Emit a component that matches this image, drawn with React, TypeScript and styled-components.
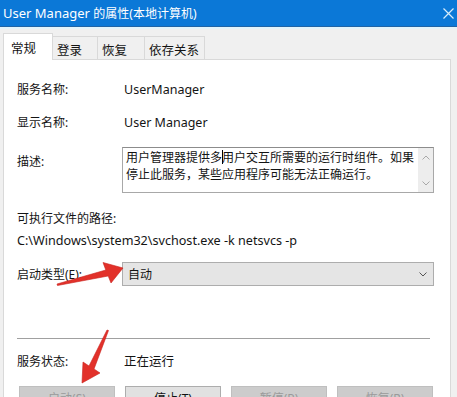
import React from "react";
import styled, { createGlobalStyle } from "styled-components";

const Global = createGlobalStyle`
  html, body { margin: 0; padding: 0; background: #f0f0f0; }
  body { width: 457px; height: 397px; overflow: hidden; }
`;

const Window = styled.div`
  position: relative;
  width: 457px;
  height: 397px;
  overflow: hidden;
  background: #f0f0f0;
  display: flex;
  flex-direction: column;
  font-family: "Noto Sans", "Noto Sans CJK SC", sans-serif;
  font-size: 12px;
  color: #141414;
`;

const TitleBar = styled.div`
  height: 26px;
  flex: none;
  background: #0b78d7;
  border-bottom: 1px solid #1f64a6;
  display: flex;
  align-items: center;
  justify-content: space-between;
  padding: 0 3px 0 3px;
  color: #ffffff;
  font-size: 13px;
`;

const TitleCJK = styled.span`
  font-size: 12px;
`;

const TabStrip = styled.div`
  flex: none;
  height: 32px;
  box-sizing: border-box;
  border-top: 2px solid #e3f4fb;
  display: flex;
  align-items: flex-end;
  padding-left: 3px;
`;

const Tab = styled.div<{ $active?: boolean; $w: number; $first?: boolean }>`
  position: relative;
  z-index: ${(p) => (p.$active ? 1 : 0)};
  box-sizing: border-box;
  width: ${(p) => p.$w}px;
  height: ${(p) => (p.$active ? 27 : 23)}px;
  margin-bottom: ${(p) => (p.$active ? -1 : 0)}px;
  background: ${(p) => (p.$active ? "#ffffff" : "#f0f0f0")};
  border-top: 1px solid #d9d9d9;
  border-right: 1px solid #d9d9d9;
  border-left: ${(p) => (p.$first ? "1px solid #d9d9d9" : "none")};
  display: flex;
  align-items: center;
  padding-left: ${(p) => (p.$active ? 7 : 4)}px;
  font-size: 12.5px;
  padding-top: ${(p) => (p.$active ? 0 : 2)}px;
`;

const Panel = styled.div`
  flex: 1;
  margin-left: 3px;
  width: 448px;
  box-sizing: border-box;
  background: #ffffff;
  border: 1px solid #d9d9d9;
  border-bottom: none;
  padding: 0 16px 0 13px;
  display: flex;
  flex-direction: column;
`;

const Row = styled.div<{ $mt: number; $top?: boolean }>`
  margin-top: ${(p) => p.$mt}px;
  display: grid;
  grid-template-columns: 105px 1fr;
  align-items: ${(p) => (p.$top ? "start" : "center")};
  line-height: 17px;
`;

const Label = styled.div<{ $pt?: number }>`
  line-height: 17px;
  padding-top: ${(p) => p.$pt ?? 0}px;
  white-space: nowrap;
`;

const Value = styled.div`
  padding-left: 2px;
  font-size: 12.5px;
  line-height: 17px;
  white-space: nowrap;
`;

const Line = styled.div<{ $mt: number; $latin?: boolean }>`
  margin-top: ${(p) => p.$mt}px;
  line-height: 17px;
  font-size: ${(p) => (p.$latin ? 12.6 : 12)}px;
  white-space: nowrap;
`;

const TextBox = styled.div`
  height: 46px;
  box-sizing: border-box;
  border: 1px solid #a8a8a8;
  border-top-color: #8c8c8c;
  display: flex;
`;

const TextArea = styled.div`
  flex: 1;
  padding: 1px 0 0 3px;
  line-height: 17px;
  white-space: nowrap;
  overflow: hidden;
`;

const Caret = styled.span`
  display: inline-block;
  width: 1px;
  height: 14px;
  background: #000;
  vertical-align: -2px;
  margin: 0 -0.5px;
`;

const ScrollBar = styled.div`
  width: 15px;
  background: #ededed;
  display: flex;
  flex-direction: column;
  justify-content: space-between;
  align-items: center;
  padding: 7px 0 6px;
  box-sizing: border-box;
`;

const Combo = styled.div`
  height: 24px;
  box-sizing: border-box;
  background: #e5e5e5;
  border: 1px solid #adadad;
  display: flex;
  align-items: center;
  justify-content: space-between;
  padding: 0 6px 0 5px;
  font-size: 12px;
`;

const Separator = styled.div`
  margin-top: 52px;
  margin-right: 4px;
  height: 1px;
  background: #a0a0a0;
`;

const ButtonRow = styled.div`
  margin-top: 16px;
  padding-left: 2px;
  display: flex;
  gap: 10px;
`;

const Button = styled.div<{ $disabled?: boolean }>`
  width: 96px;
  height: 23px;
  box-sizing: border-box;
  flex: none;
  background: ${(p) => (p.$disabled ? "#cccccc" : "#e1e1e1")};
  border: 1px solid ${(p) => (p.$disabled ? "#bfbfbf" : "#adadad")};
  color: ${(p) => (p.$disabled ? "#9a9a9a" : "#111")};
  display: flex;
  align-items: center;
  justify-content: center;
  font-size: 12px;
`;

const Overlay = styled.svg`
  position: absolute;
  left: 0;
  top: 0;
  pointer-events: none;
`;

const Chevron = ({ up, color }: { up?: boolean; color: string }) => (
  <svg width="8" height="5" viewBox="0 0 8 5">
    <path
      d={up ? "M0.5 4.5 L4 1 L7.5 4.5" : "M0.5 0.5 L4 4 L7.5 0.5"}
      fill="none"
      stroke={color}
      strokeWidth="1"
    />
  </svg>
);

const tabs = [
  { label: "常规", w: 50 },
  { label: "登录", w: 45 },
  { label: "恢复", w: 47 },
  { label: "依存关系", w: 60 },
];

const buttons = [
  { label: "启动(S)", disabled: true },
  { label: "停止(T)", disabled: false },
  { label: "暂停(P)", disabled: true },
  { label: "恢复(R)", disabled: true },
];

export default function App() {
  return (
    <Window>
      <Global />
      <TitleBar>
        <span>
          User Manager <TitleCJK>的属性(本地计算机)</TitleCJK>
        </span>
        <svg width="11" height="11" viewBox="0 0 11 11">
          <path d="M0.5 0.5 L10.5 10.5 M10.5 0.5 L0.5 10.5" stroke="#d6ecfb" strokeWidth="1.2" />
        </svg>
      </TitleBar>
      <TabStrip>
        {tabs.map((t, i) => (
          <Tab key={t.label} $w={t.w} $active={i === 0} $first={i === 0}>
            {t.label}
          </Tab>
        ))}
      </TabStrip>
      <Panel>
        <Row $mt={21}>
          <Label>服务名称:</Label>
          <Value>UserManager</Value>
        </Row>
        <Row $mt={16}>
          <Label>显示名称:</Label>
          <Value>User Manager</Value>
        </Row>
        <Row $mt={16} $top>
          <Label $pt={6}>描述:</Label>
          <TextBox>
            <TextArea>
              用户管理器提供多<Caret />用户交互所需要的运行时组件。如果
              <br />
              停止此服务，某些应用程序可能无法正确运行。
            </TextArea>
            <ScrollBar>
              <Chevron up color="#a8a8a8" />
              <Chevron color="#a8a8a8" />
            </ScrollBar>
          </TextBox>
        </Row>
        <Line $mt={17}>可执行文件的路径:</Line>
        <Line $mt={5} $latin>
          C:\Windows\system32\svchost.exe -k netsvcs -p
        </Line>
        <Row $mt={13}>
          <Label>启动类型(E):</Label>
          <Combo>
            <span>自动</span>
            <Chevron color="#555" />
          </Combo>
        </Row>
        <Separator />
        <Row $mt={14}>
          <Label>服务状态:</Label>
          <Value>正在运行</Value>
        </Row>
        <ButtonRow>
          {buttons.map((b) => (
            <Button key={b.label} $disabled={b.disabled}>
              {b.label}
            </Button>
          ))}
        </ButtonRow>
      </Panel>
      <Overlay width="457" height="397" viewBox="0 0 457 397">
        <polygon
          points="57,284 105.8,270 103,262.5 123,268 111,283 108.2,276 57.5,285.5"
          fill="#e2312a"
          stroke="#c9221c"
          strokeWidth="0.6"
          strokeLinejoin="round"
        />
        <polygon
          points="107,330 89,366 83,362 82,383 100,373 94,369 108.5,330.5"
          fill="#e2312a"
          stroke="#c9221c"
          strokeWidth="0.6"
          strokeLinejoin="round"
        />
      </Overlay>
    </Window>
  );
}
